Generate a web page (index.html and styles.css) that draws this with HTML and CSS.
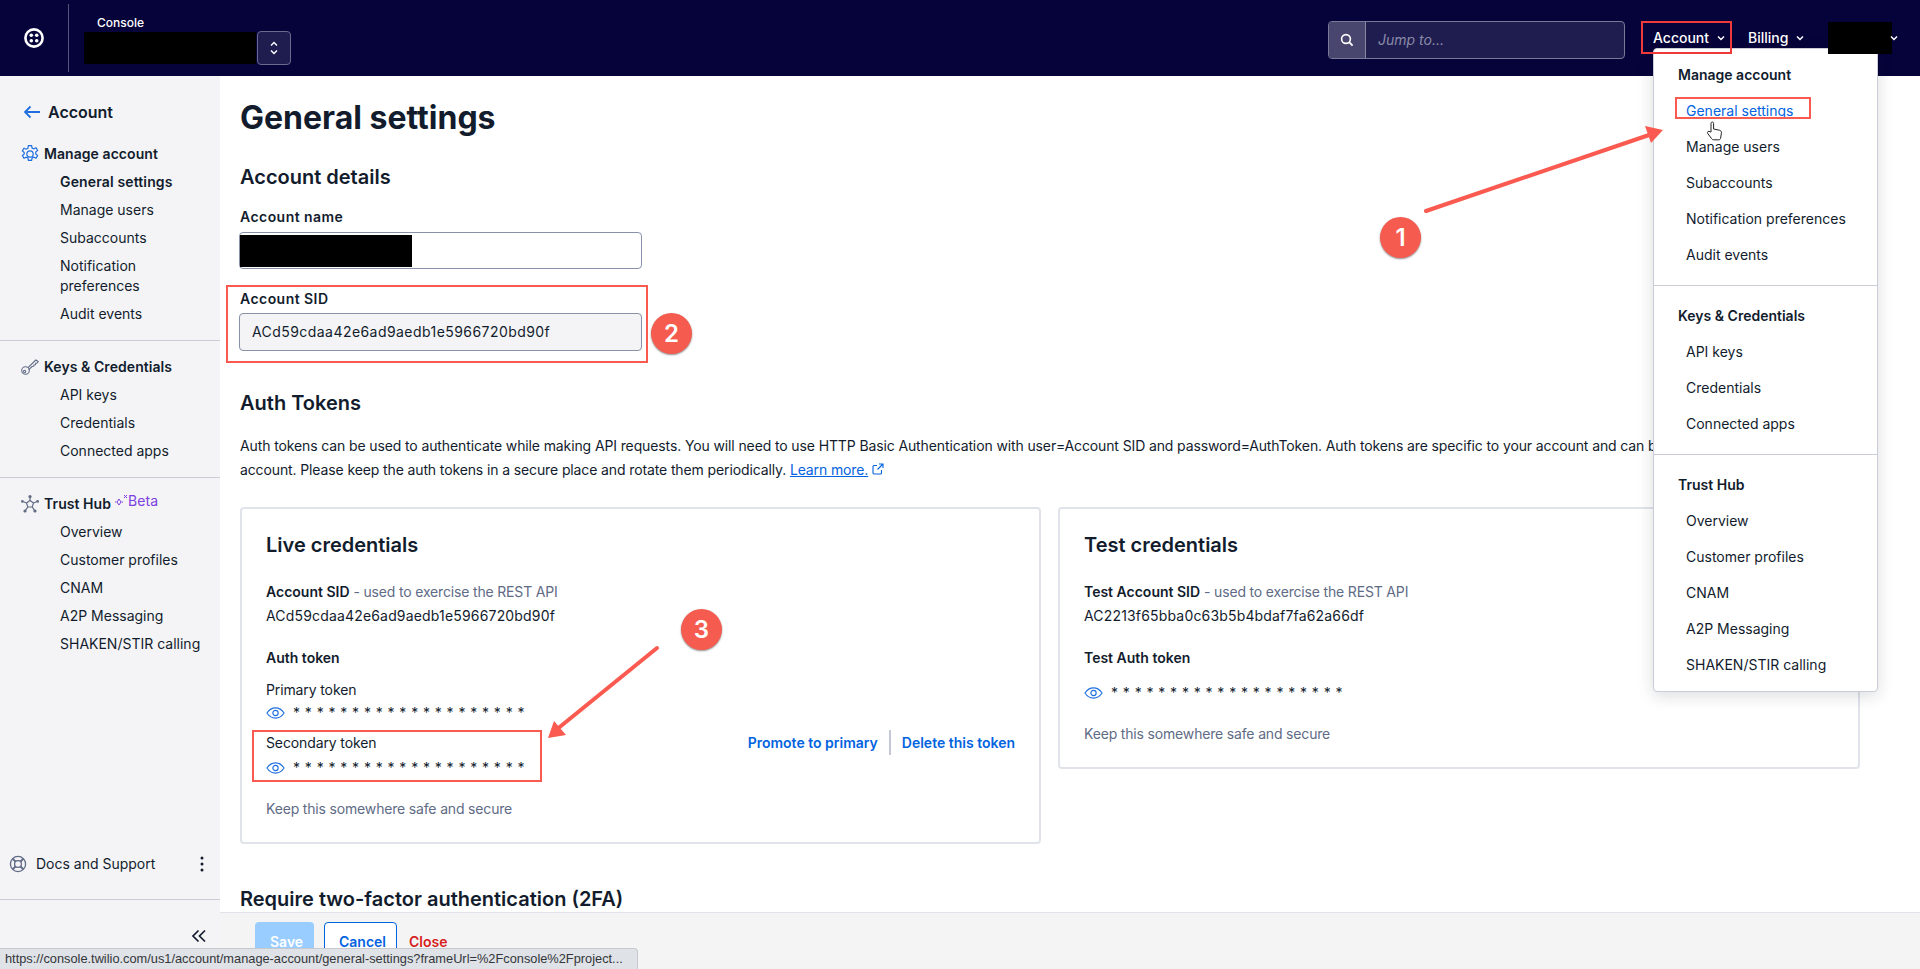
FILE: index.html
```html
<!DOCTYPE html>
<html lang="en">
<head>
    <meta charset="UTF-8">
    <title>General settings</title>
    <link rel="stylesheet" href="styles.css">
</head>
<body>
    <!-- Top bar -->
    <header class="topbar">
        <div class="logo-cell">
            <svg class="logo" viewBox="0 0 20 20"><circle cx="10" cy="10" r="8.6" fill="none" stroke="#fff" stroke-width="2.6"/><circle cx="7.3" cy="7.3" r="1.8" fill="#fff"/><circle cx="12.7" cy="7.3" r="1.8" fill="#fff"/><circle cx="7.3" cy="12.7" r="1.8" fill="#fff"/><circle cx="12.7" cy="12.7" r="1.8" fill="#fff"/></svg>
        </div>
        <div class="project">
            <div class="project-label">Console</div>
            <div class="project-row">
                <div class="redacted project-name"></div>
                <div class="project-switch">
                    <svg width="10" height="16" viewBox="0 0 10 16"><path d="M2 5.5 5 2.5 8 5.5M2 10.5 5 13.5 8 10.5" fill="none" stroke="#fff" stroke-width="1.4"/></svg>
                </div>
            </div>
        </div>
        <div class="search">
            <div class="search-icon">
                <svg width="16" height="16" viewBox="0 0 16 16"><circle cx="7" cy="7" r="4.4" fill="none" stroke="#fff" stroke-width="1.6"/><path d="M10.2 10.2 13.6 13.6" stroke="#fff" stroke-width="1.8"/></svg>
            </div>
            <div class="search-text">Jump to...</div>
        </div>
        <nav class="topnav">
            <div class="topnav-item topnav-account">Account <svg class="chev" viewBox="0 0 10 10"><path d="M2 3.5 5 6.5 8 3.5" fill="none" stroke="#fff" stroke-width="1.5"/></svg></div>
            <div class="topnav-item topnav-billing">Billing <svg class="chev" viewBox="0 0 10 10"><path d="M2 3.5 5 6.5 8 3.5" fill="none" stroke="#fff" stroke-width="1.5"/></svg></div>
            <div class="topnav-item topnav-user"><div class="redacted user-name"></div><svg class="chev" viewBox="0 0 10 10"><path d="M2 3.5 5 6.5 8 3.5" fill="none" stroke="#fff" stroke-width="1.5"/></svg></div>
        </nav>
    </header>

    <div class="layout">
        <!-- Sidebar -->
        <aside class="sidebar">
            <div class="back">
                <svg width="18" height="14" viewBox="0 0 18 14"><path d="M17 7H2M7.5 1.5 2 7l5.5 5.5" fill="none" stroke="#1f6fe0" stroke-width="1.8"/></svg>
                <span>Account</span>
            </div>
            <div class="side-group side-group-first">
                <div class="side-head">
                    <svg class="side-icon" viewBox="0 0 20 20" fill="none" stroke="#1f6fe0" stroke-width="1.2"><path d="M8.4 1.6h3.2l.5 2.4 1.7.8 2.2-1 1.6 2.7-1.8 1.6v1.8l1.8 1.6-1.6 2.7-2.2-1-1.7.8-.5 2.4H8.4l-.5-2.4-1.7-.8-2.2 1-1.6-2.7 1.8-1.6V8.5L2.4 6.9 4 4.2l2.2 1 1.7-.8z"/><circle cx="10" cy="10" r="3.2"/></svg>
                    <span>Manage account</span>
                </div>
                <a class="side-link active">General settings</a>
                <a class="side-link">Manage users</a>
                <a class="side-link">Subaccounts</a>
                <a class="side-link">Notification preferences</a>
                <a class="side-link">Audit events</a>
            </div>
            <div class="side-group">
                <div class="side-head">
                    <svg class="side-icon" viewBox="0 0 20 20" fill="none" stroke="#606b85" stroke-width="1.1"><circle cx="5.5" cy="13.5" r="3.8"/><circle cx="4.6" cy="14.4" r="1.1"/><path d="M8 10.6 15.8 3l2.4 1.4-1 1.6-1.5.2-.3 1.5-1.5.2-.3 1.4-1.6.2-3.2 3.2"/></svg>
                    <span>Keys &amp; Credentials</span>
                </div>
                <a class="side-link">API keys</a>
                <a class="side-link">Credentials</a>
                <a class="side-link">Connected apps</a>
            </div>
            <div class="side-group side-group-last">
                <div class="side-head">
                    <svg class="side-icon" viewBox="0 0 20 20" fill="none" stroke="#606b85" stroke-width="1.2"><path d="M10 6.500 13.500 9 12.200 13H7.800L6.500 9z"/><path d="M10 6.500V3M13.500 9l3-1.200M12.200 13l2.300 3.300M7.800 13l-2.300 3.300M6.500 9l-3-1.200"/><g fill="#606b85" stroke="none"><circle cx="10" cy="2.600" r="1.600"/><circle cx="17.600" cy="7.400" r="1.400"/><circle cx="15" cy="17" r="1.600"/><circle cx="5" cy="17" r="1.600"/><circle cx="2.400" cy="7.400" r="1.400"/></g></svg>
                    <span>Trust Hub</span>
                    <span class="beta">
                        <svg width="14" height="14" viewBox="0 0 14 14" fill="none" stroke="#7d3fe0" stroke-width="1"><path d="M5 5 7 8 5 11 3 8zM1 8h1.500M7.500 8H9"/><path d="M10 1 13 4M13 1 10 4"/></svg>Beta
                    </span>
                </div>
                <a class="side-link">Overview</a>
                <a class="side-link">Customer profiles</a>
                <a class="side-link">CNAM</a>
                <a class="side-link">A2P Messaging</a>
                <a class="side-link">SHAKEN/STIR calling</a>
            </div>
            <div class="docs">
                <svg width="18" height="18" viewBox="0 0 18 18" fill="none" stroke="#606b85" stroke-width="1.3"><circle cx="9" cy="9" r="7.6"/><circle cx="9" cy="9" r="3.4"/><path d="M3.7 3.7 6.6 6.6M14.3 3.7 11.4 6.6M3.7 14.3 6.6 11.4M14.3 14.3 11.4 11.4" stroke-width="2"/></svg>
                <span>Docs and Support</span>
                <svg class="docs-more" width="4" height="18" viewBox="0 0 4 18"><circle cx="2" cy="3" r="1.5" fill="#121c2d"/><circle cx="2" cy="9" r="1.5" fill="#121c2d"/><circle cx="2" cy="15" r="1.5" fill="#121c2d"/></svg>
            </div>
            <div class="collapse">
                <svg width="16" height="14" viewBox="0 0 16 14"><path d="M7.500 1.500 2 7l5.500 5.500M14 1.500 8.500 7l5.500 5.500" fill="none" stroke="#121c2d" stroke-width="1.7"/></svg>
            </div>
        </aside>

        <!-- Main content -->
        <main class="main">
            <div class="content">
                <h1>General settings</h1>
                <h2 class="details-title">Account details</h2>
                <label class="field-label first">Account name</label>
                <div class="input"><div class="redacted account-name"></div></div>
                <label class="field-label second">Account SID</label>
                <div class="input input-readonly">ACd59cdaa42e6ad9aedb1e5966720bd90f</div>

                <h2 class="tokens-title">Auth Tokens</h2>
                <p class="intro">Auth tokens can be used to authenticate while making API requests. You will need to use HTTP Basic Authentication with user=Account SID and password=AuthToken. Auth tokens are specific to your account and can be<br>account. Please keep the auth tokens in a secure place and rotate them periodically. <a class="link">Learn more.</a>
                    <svg width="12" height="12" viewBox="0 0 12 12" fill="none" stroke="#0263e0" stroke-width="1.1"><path d="M9.5 7v3a1 1 0 0 1-1 1H2a1 1 0 0 1-1-1V3.5a1 1 0 0 1 1-1h3M7 1h4v4M11 1 5.5 6.5"/></svg>
                </p>

                <div class="cards">
                    <section class="card">
                        <h3>Live credentials</h3>
                        <div class="sid-label"><b>Account SID</b> <span class="muted">- used to exercise the REST API</span></div>
                        <div class="sid-value">ACd59cdaa42e6ad9aedb1e5966720bd90f</div>
                        <div class="token-head">Auth token</div>
                        <div class="token-name">Primary token</div>
                        <div class="token-mask">
                            <svg class="eye" viewBox="0 0 20 14" fill="none" stroke="#1f6fe0" stroke-width="1.2"><path d="M1 7c2.400-3.600 5.400-5.400 9-5.400s6.600 1.800 9 5.400c-2.400 3.600-5.400 5.400-9 5.400S3.400 10.600 1 7z"/><circle cx="10" cy="7" r="2.800"/></svg>
                            <span class="stars">********************</span>
                        </div>
                        <div class="token-row">
                            <div class="token-name">Secondary token</div>
                            <div class="token-actions">
                                <a class="action">Promote to primary</a>
                                <span class="action-sep"></span>
                                <a class="action">Delete this token</a>
                            </div>
                        </div>
                        <div class="token-mask token-mask-second">
                            <svg class="eye" viewBox="0 0 20 14" fill="none" stroke="#1f6fe0" stroke-width="1.2"><path d="M1 7c2.400-3.600 5.400-5.400 9-5.400s6.600 1.800 9 5.400c-2.400 3.600-5.400 5.400-9 5.400S3.400 10.600 1 7z"/><circle cx="10" cy="7" r="2.800"/></svg>
                            <span class="stars">********************</span>
                        </div>
                        <div class="keep muted">Keep this somewhere safe and secure</div>
                    </section>
                    <section class="card">
                        <h3>Test credentials</h3>
                        <div class="sid-label"><b>Test Account SID</b> <span class="muted">- used to exercise the REST API</span></div>
                        <div class="sid-value">AC2213f65bba0c63b5b4bdaf7fa62a66df</div>
                        <div class="token-head">Test Auth token</div>
                        <div class="token-mask token-mask-test">
                            <svg class="eye" viewBox="0 0 20 14" fill="none" stroke="#1f6fe0" stroke-width="1.2"><path d="M1 7c2.400-3.600 5.400-5.400 9-5.400s6.600 1.800 9 5.400c-2.400 3.600-5.400 5.400-9 5.400S3.400 10.600 1 7z"/><circle cx="10" cy="7" r="2.800"/></svg>
                            <span class="stars">********************</span>
                        </div>
                        <div class="keep muted">Keep this somewhere safe and secure</div>
                    </section>
                </div>

                <h2 class="tfa-title">Require two-factor authentication (2FA)</h2>
            </div>
            <footer class="savebar">
                <button class="btn btn-save" type="button">Save</button>
                <button class="btn btn-cancel" type="button">Cancel</button>
                <button class="btn btn-close" type="button">Close</button>
            </footer>
        </main>
    </div>

    <!-- Account dropdown -->
    <div class="menu">
        <div class="menu-section">
            <div class="menu-head">Manage account</div>
            <div class="menu-item"><a class="menu-current">General settings</a></div>
            <div class="menu-item">Manage users</div>
            <div class="menu-item">Subaccounts</div>
            <div class="menu-item">Notification preferences</div>
            <div class="menu-item">Audit events</div>
        </div>
        <div class="menu-section">
            <div class="menu-head">Keys &amp; Credentials</div>
            <div class="menu-item">API keys</div>
            <div class="menu-item">Credentials</div>
            <div class="menu-item">Connected apps</div>
        </div>
        <div class="menu-section menu-section-last">
            <div class="menu-head">Trust Hub</div>
            <div class="menu-item">Overview</div>
            <div class="menu-item">Customer profiles</div>
            <div class="menu-item">CNAM</div>
            <div class="menu-item">A2P Messaging</div>
            <div class="menu-item">SHAKEN/STIR calling</div>
        </div>
    </div>

    <!-- Browser link preview -->
    <div class="statusbar">https://console.twilio.com/us1/account/manage-account/general-settings?frameUrl=%2Fconsole%2Fproject...</div>

    <!-- Tutorial annotations drawn on top of the screenshot -->
    <svg class="marks" viewBox="0 0 1920 969">
        <g fill="none" stroke="#fa5a4f" stroke-width="4" stroke-linecap="round">
            <path d="M1426 211 1652 134"/>
            <path d="M657 648 556 730"/>
        </g>
        <g fill="#fa5a4f">
            <path d="M1663 130 1645 126 1651 143z"/>
            <path d="M548 738 554 721 566 735z"/>
        </g>
        <g fill="#fff" stroke="#222" stroke-width="1">
            <path d="M1711 132v-8.500c0-2 2.600-2 2.600 0v5.500l5.800 1.200c1.600.4 2.200 1.400 2 3l-.8 5c-.2 1-.8 1.600-1.800 1.600h-5c-1 0-1.600-.4-2.200-1.200l-3.800-5c-1.200-1.800.8-3 2.200-1.800z"/>
        </g>
    </svg>
    <div class="box box-account"></div>
    <div class="box box-general"></div>
    <div class="box box-sid"></div>
    <div class="box box-secondary"></div>
    <div class="badge badge-one">1</div>
    <div class="badge badge-two">2</div>
    <div class="badge badge-three">3</div>
</body>
</html>
```

FILE: styles.css
```css
* {
    box-sizing: border-box;
}
body {
    margin: 0;
    height: 969px;
    overflow: hidden;
    display: flex;
    flex-direction: column;
    font-family: Inter, "Noto Sans", sans-serif;
    font-size: 14px;
    line-height: 20px;
    color: #121c2d;
    background-color: #fff;
}
.redacted {
    background-color: #000;
}

/* top bar */
.topbar {
    flex: 0 0 76px;
    display: flex;
    align-items: center;
    background-color: #06033a;
    color: #fff;
}
.logo-cell {
    width: 69px;
    height: 68px;
    display: flex;
    align-items: center;
    padding-left: 24px;
    border-right: 1px solid #55557a;
}
.logo {
    width: 20px;
    height: 20px;
}
.project {
    margin-left: 15px;
    padding-top: 3px;
}
.project-label {
    padding-left: 13px;
    font-size: 12px;
    line-height: 16px;
    font-weight: 500;
}
.project-row {
    display: flex;
    align-items: center;
    margin-top: 0;
}
.project-name {
    width: 172px;
    height: 32px;
}
.project-switch {
    width: 34px;
    height: 34px;
    margin-left: 1px;
    display: flex;
    align-items: center;
    justify-content: center;
    background-color: #1f1d4f;
    border: 1px solid #6a6a8c;
    border-radius: 4px;
}
.search {
    width: 297px;
    height: 38px;
    margin-left: auto;
    margin-top: 4px;
    display: flex;
    border: 1px solid #7a7a98;
    border-radius: 4px;
    overflow: hidden;
    background-color: #1f1d4f;
}
.search-icon {
    width: 37px;
    display: flex;
    align-items: center;
    justify-content: center;
    background-color: #48466f;
    border-right: 1px solid #8a8aa6;
}
.search-text {
    padding-left: 12px;
    line-height: 36px;
    font-style: italic;
    color: #8a8ba8;
}
.topnav {
    display: flex;
    align-items: center;
    margin-left: 28px;
    padding-right: 21px;
    font-weight: 500;
}
.topnav-item {
    display: flex;
    align-items: center;
}
.chev {
    width: 10px;
    height: 10px;
}
.topnav-account {
    width: 95px;
    gap: 7px;
}
.topnav-billing {
    width: 80px;
    gap: 7px;
}
.user-name {
    position: relative;
    z-index: 1;
    width: 64px;
    height: 32px;
}
.topnav-user .chev {
    position: relative;
    z-index: 2;
    margin-left: -3px;
}

/* sidebar */
.layout {
    flex: 1;
    min-height: 0;
    display: flex;
}
.sidebar {
    flex: 0 0 220px;
    display: flex;
    flex-direction: column;
    padding-top: 24px;
    background-color: #f4f4f6;
}
.back {
    display: flex;
    align-items: center;
    gap: 7px;
    height: 24px;
    padding-left: 23px;
    font-size: 16px;
    font-weight: 600;
}
.side-group {
    padding: 12px 0;
    border-bottom: 1px solid #cacdd8;
}
.side-group-first {
    padding-top: 0;
    margin-top: 16px;
}
.side-group-last {
    border-bottom: none;
}
.side-head {
    display: flex;
    align-items: center;
    height: 28px;
    padding-left: 20px;
    font-weight: 600;
    letter-spacing: 0.06px;
}
.side-icon {
    width: 20px;
    height: 20px;
    margin-right: 4px;
    flex: none;
}
.beta {
    display: flex;
    align-items: center;
    margin-top: -6px;
    margin-left: 3px;
    font-weight: 400;
    color: #7d3fe0;
}
.side-link {
    display: block;
    padding: 4px 14px 4px 60px;
}
.side-link:nth-child(5) {
    padding-right: 40px;
}
.active {
    font-weight: 600;
    letter-spacing: 0.14px;
}
.docs {
    display: flex;
    align-items: center;
    gap: 9px;
    height: 34px;
    margin-top: auto;
    margin-bottom: 18px;
    padding-left: 9px;
}
.docs-more {
    margin-left: auto;
    margin-right: 16px;
}
.collapse {
    height: 70px;
    padding: 29px 13px 0 0;
    display: flex;
    justify-content: flex-end;
    align-items: flex-start;
    border-top: 1px solid #cacdd8;
}

/* main column */
.main {
    flex: 1;
    min-width: 0;
    display: flex;
    flex-direction: column;
}
.content {
    flex: 1;
    min-height: 0;
    overflow: hidden;
    padding: 22px 60px 0 20px;
}
h1 {
    margin: 0;
    font-size: 32px;
    line-height: 40px;
    font-weight: 700;
}
h2 {
    margin: 0;
    font-size: 20px;
    line-height: 28px;
    font-weight: 600;
}
.details-title {
    margin-top: 25px;
}
.field-label {
    display: block;
    font-weight: 600;
    letter-spacing: 0.45px;
}
.field-label.first {
    margin-top: 16px;
}
.field-label.second {
    margin-top: 20px;
}
.input {
    width: 403px;
    height: 37px;
    margin-top: 5px;
    margin-left: -1px;
    padding-top: 2px;
    border: 1px solid #8891aa;
    border-radius: 4px;
}
.account-name {
    width: 172px;
    height: 32px;
}
.input-readonly {
    height: 38px;
    margin-top: 4px;
    padding: 8px 0 0 12px;
    background-color: #f4f4f6;
    letter-spacing: 0.44px;
}
.tokens-title {
    margin-top: 38px;
}
.intro {
    margin: 17px 0 0;
    line-height: 24px;
    white-space: nowrap;
    letter-spacing: -0.12px;
}
.link {
    color: #0263e0;
    text-decoration: underline;
}
.cards {
    display: grid;
    grid-template-columns: 801px 802px;
    gap: 17px;
    align-items: start;
    margin-top: 25px;
}
.card {
    padding: 22px 24px 21px;
    border: 2px solid #e1e3ea;
    border-radius: 4px;
    line-height: 24px;
}
h3 {
    margin: 0;
    font-size: 20px;
    line-height: 28px;
    font-weight: 600;
}
.sid-label {
    margin-top: 21px;
}
.sid-label b {
    font-weight: 600;
}
.sid-value {
    letter-spacing: 0.17px;
}
.muted {
    color: #606b85;
    letter-spacing: -0.17px;
}
.token-head {
    margin-top: 18px;
    font-weight: 600;
}
.token-name {
    margin-top: 8px;
    letter-spacing: -0.12px;
}
.token-mask {
    display: flex;
    align-items: center;
    height: 22px;
    gap: 8px;
}
.token-mask-second {
    margin-top: 2px;
}
.token-mask-test {
    margin-top: 12px;
}
.eye {
    width: 19px;
    height: 14px;
}
.stars {
    line-height: 22px;
    letter-spacing: 4.8px;
}
.token-row {
    display: flex;
    justify-content: space-between;
    align-items: center;
    margin-top: 6px;
}
.token-row .token-name {
    margin-top: 0;
}
.token-actions {
    display: flex;
    align-items: center;
    gap: 11px;
}
.action {
    font-weight: 600;
    color: #0263e0;
}
.action-sep {
    width: 2px;
    height: 25px;
    background-color: #c3c7d6;
}
.keep {
    margin-top: 18px;
}
.tfa-title {
    margin-top: 41px;
}
.savebar {
    flex: 0 0 57px;
    display: flex;
    align-items: flex-start;
    padding: 9px 0 0 35px;
    background-color: #f4f4f4;
    border-top: 1px solid #e1e3ea;
}
.btn {
    height: 38px;
    padding: 0 14px;
    font-family: inherit;
    font-size: 14px;
    font-weight: 600;
    border: 1px solid transparent;
    border-radius: 4px;
    background: none;
}
.btn-save {
    width: 59px;
    color: #fff;
    background-color: #99cdff;
}
.btn-cancel {
    width: 73px;
    margin-left: 10px;
    color: #0263e0;
    background-color: #fff;
    border-color: #0263e0;
}
.btn-close {
    padding: 0 11px;
    color: #d61f1f;
}

/* dropdown */
.menu {
    position: absolute;
    left: 1653px;
    top: 48px;
    width: 225px;
    height: 644px;
    padding-top: 8px;
    background-color: #fff;
    border: 1px solid #cacdd8;
    border-radius: 4px;
    box-shadow: 0 4px 16px rgba(18, 28, 45, 0.15);
}
.menu-section {
    padding: 12px 0;
    border-bottom: 1px solid #cacdd8;
}
.menu-section:first-child {
    padding-top: 0;
}
.menu-section-last {
    border-bottom: none;
}
.menu-head {
    height: 36px;
    padding-left: 24px;
    line-height: 36px;
    font-weight: 600;
}
.menu-item {
    height: 36px;
    padding-left: 32px;
    line-height: 36px;
}
.menu-current {
    color: #0263e0;
    text-decoration: underline;
}

/* link preview */
.statusbar {
    position: absolute;
    left: 0;
    bottom: 0;
    width: 638px;
    height: 21px;
    padding-left: 5px;
    font-family: "Liberation Sans", Arial, sans-serif;
    font-size: 12.8px;
    line-height: 20px;
    white-space: nowrap;
    color: #33363b;
    background-color: #dfe2e6;
    border-top: 1px solid #c6c9ce;
    border-right: 1px solid #c6c9ce;
    border-top-right-radius: 4px;
}

/* annotations */
.marks {
    position: absolute;
    left: 0;
    top: 0;
    width: 1920px;
    height: 969px;
    pointer-events: none;
}
.box {
    position: absolute;
    border: 2px solid #fa5a4f;
}
.box-account {
    left: 1641px;
    top: 21px;
    width: 91px;
    height: 33px;
    border-color: #f03a3a;
}
.box-general {
    left: 1675px;
    top: 97px;
    width: 136px;
    height: 22px;
}
.box-sid {
    left: 226px;
    top: 285px;
    width: 422px;
    height: 78px;
}
.box-secondary {
    left: 252px;
    top: 730px;
    width: 290px;
    height: 52px;
}
.badge {
    position: absolute;
    width: 41px;
    height: 41px;
    border-radius: 50%;
    text-align: center;
    font-size: 24px;
    line-height: 41px;
    font-weight: 600;
    color: #fff;
    background-color: #f55b4e;
    box-shadow: 0 1px 2px rgba(0, 0, 0, 0.45);
}
.badge-one {
    left: 1380px;
    top: 217px;
}
.badge-two {
    left: 651px;
    top: 313px;
}
.badge-three {
    left: 681px;
    top: 609px;
}
```
